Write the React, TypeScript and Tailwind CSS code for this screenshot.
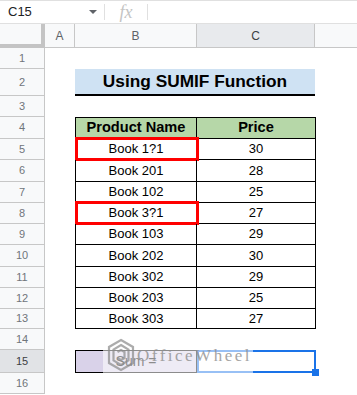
import React from "react";

const F = { fontFamily: '"Liberation Sans", Arial, sans-serif' };

const heights = [21, 27, 21, 22, 21, 22, 21, 21, 21, 22, 21, 21, 20, 21, 23, 21];
const data: [string, number, boolean][] = [
  ["Book 1?1", 30, true],
  ["Book 201", 28, false],
  ["Book 102", 25, false],
  ["Book 3?1", 27, true],
  ["Book 103", 29, false],
  ["Book 202", 30, false],
  ["Book 302", 29, false],
  ["Book 203", 25, false],
  ["Book 303", 27, false],
];

function RowHead({ n, sel }: { n: number; sel?: boolean }) {
  return (
    <div
      className={`w-[45px] shrink-0 h-full flex items-center justify-center border-r border-b border-[#c7c7c7] text-[11px] ${
        sel ? "bg-[#e1e3e6] text-[#3c4043]" : "bg-[#f8f9fa] text-[#70757a]"
      }`}
    >
      {n}
    </div>
  );
}

function Logo() {
  return (
    <svg width="28" height="34" viewBox="0 0 28 34" fill="none" stroke="#8a8a8a" strokeWidth="2.2">
      <path d="M14 2 L26 9 L26 25 L14 32 L2 25 L2 9 Z" />
      <path d="M14 7 L21.5 11.5 L21.5 22.5 L14 27 L6.5 22.5 L6.5 11.5 Z" />
      <path d="M10.5 14 L14 12 L17.5 14 L17.5 20 L14 22 L10.5 20" />
    </svg>
  );
}

export default function App() {
  let idx = 0;
  return (
    <div className="relative w-[357px] h-[395px] overflow-hidden bg-white text-black" style={F}>
      {/* formula bar */}
      <div className="h-[24px] flex items-center border-t border-b border-[#e0e0e0] bg-white">
        <div className="w-[104px] flex items-center pl-[8px] pr-[7px] text-[13px] text-[#202124]">
          <span className="flex-1">C15</span>
          <span className="w-0 h-0 border-l-[4px] border-r-[4px] border-t-[4px] border-l-transparent border-r-transparent border-t-[#5f6368]" />
        </div>
        <div className="w-px h-[16px] bg-[#e0e0e0]" />
        <div
          className="w-[42px] text-center text-[18px] italic text-[#c4c4c4] leading-none"
          style={{ fontFamily: '"Liberation Serif", "Times New Roman", serif' }}
        >
          fx
        </div>
        <div className="w-px h-[16px] bg-[#e0e0e0]" />
      </div>

      {/* column headers */}
      <div className="h-[24px] flex text-[12px] text-[#5f6368]">
        <div className="w-[45px] shrink-0 bg-[#f8f9fa] border-r-[4px] border-b-[4px] border-[#c4c4c4]" />
        <div className="w-[30px] shrink-0 flex items-center justify-center bg-[#f8f9fa] border-r border-b border-[#c7c7c7]">A</div>
        <div className="w-[122px] shrink-0 flex items-center justify-center bg-[#f8f9fa] border-r border-b border-[#c7c7c7]">B</div>
        <div className="w-[118px] shrink-0 flex items-center justify-center bg-[#e8eaed] border-r border-b border-[#c7c7c7] text-[#3c4043]">C</div>
        <div className="flex-1 bg-[#f8f9fa] border-b border-[#c7c7c7]" />
      </div>

      {/* rows */}
      {heights.map((h, i) => {
        const n = i + 1;
        let content: React.ReactNode = null;
        if (n === 2) {
          content = (
            <div className="w-[240px] h-full bg-[#cfe2f3] border-b-2 border-black flex items-center justify-center font-bold text-[17.3px]">
              Using SUMIF Function
            </div>
          );
        } else if (n === 4) {
          content = (
            <div className="flex h-full font-bold text-[14.6px]">
              <div className="w-[122px] h-full flex items-center justify-center bg-[#b6d7a8] border border-black">Product Name</div>
              <div className="w-[119px] h-full flex items-center justify-center bg-[#b6d7a8] border-t border-r border-b border-black">Price</div>
            </div>
          );
        } else if (n >= 5 && n <= 13) {
          const [name, price, red] = data[idx++];
          content = (
            <div className="flex h-full text-[13px]">
              <div className="relative w-[122px] h-full flex items-center justify-center border-l border-r border-b border-black">
                {name}
                {red && <div className="absolute left-[-1px] top-[-2px] right-[-3px] bottom-[-2px] border-[3px] border-[#ff0000]" />}
              </div>
              <div className="w-[119px] h-full flex items-center justify-center border-r border-b border-black">{price}</div>
            </div>
          );
        } else if (n === 15) {
          content = (
            <div className="flex h-full text-[14px]">
              <div className="w-[122px] h-full flex items-center justify-center bg-[#d9d2e9] border border-black">Sum =</div>
              <div className="relative w-[119px] h-full border-2 border-[#1a73e8]">
                <div className="absolute right-[-5px] bottom-[-5px] w-[7px] h-[7px] bg-[#1a73e8]" />
              </div>
            </div>
          );
        }
        return (
          <div key={n} className="flex" style={{ height: h }}>
            <RowHead n={n} sel={n === 15} />
            <div className="w-[30px] shrink-0" />
            <div className="flex-1 h-full">{content}</div>
          </div>
        );
      })}

      {/* watermark overlay */}
      <div className="absolute left-[103px] top-[337px] w-[150px] h-[36px] bg-white/55 flex items-center pl-[4px] gap-[2px]">
        <div className="opacity-70">
          <Logo />
        </div>
        <span
          className="text-[17px] tracking-[2.5px] text-[#8f8f8f] opacity-80 mt-[2px]"
          style={{ fontFamily: '"Liberation Serif", "Times New Roman", serif' }}
        >
          OfficeWheel
        </span>
      </div>
    </div>
  );
}
